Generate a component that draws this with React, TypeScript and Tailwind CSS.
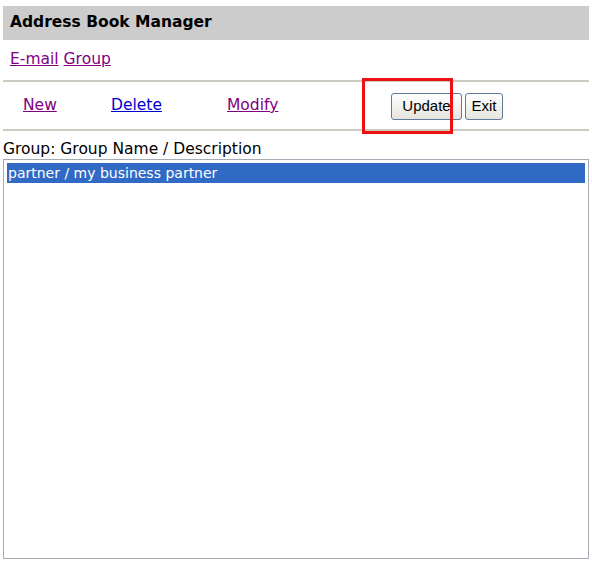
export default function App() {
  return (
    <div className="relative w-[592px] h-[562px] bg-white px-[3px] text-black overflow-hidden font-['DejaVu_Sans',Verdana,sans-serif]">
      <div className="mt-[6px] h-[34px] bg-[#cccccc] flex items-center pl-[7px] text-[15.5px] font-bold">
        Address Book Manager
      </div>

      <div className="h-[40px] flex items-center pl-[7px] gap-[5px] text-[15.5px]">
        <a href="#" className="text-[#800080] underline">E-mail</a>
        <a href="#" className="text-[#800080] underline">Group</a>
      </div>

      <div className="h-[2px] bg-[#cbcbc1]" />

      <div className="h-[47px] flex items-center text-[15.5px]">
        <div className="w-[108px] pl-[20px]">
          <a href="#" className="text-[#800080] underline">New</a>
        </div>
        <div className="w-[116px]">
          <a href="#" className="text-[#0000cc] underline">Delete</a>
        </div>
        <div className="w-[164px]">
          <a href="#" className="text-[#800080] underline">Modify</a>
        </div>
        <div className="flex gap-[3px] pt-[2px] text-[15px] font-['Liberation_Sans',Arial,sans-serif]">
          <button className="h-[27px] w-[71px] rounded-[3px] border border-[#5f7a98] bg-gradient-to-b from-white to-[#e6e5de] text-black">
            Update
          </button>
          <button className="h-[27px] w-[38px] rounded-[3px] border border-[#5f7a98] bg-gradient-to-b from-white to-[#e6e5de] text-black">
            Exit
          </button>
        </div>
      </div>

      <div className="h-[2px] bg-[#cbcbc1]" />

      <div className="h-[28px] flex items-end pb-[2px] text-[15.5px] leading-none">
        Group: Group Name / Description
      </div>

      <div className="h-[400px] border border-[#a5acb5] p-[3px] text-[14px]">
        <div className="h-[20px] bg-[#316ac5] text-white flex items-center pl-[1px]">
          partner / my business partner
        </div>
      </div>

      <div className="absolute left-[362px] top-[78px] w-[91px] h-[56px] border-[3px] border-[#ee1111]" />
    </div>
  );
}
